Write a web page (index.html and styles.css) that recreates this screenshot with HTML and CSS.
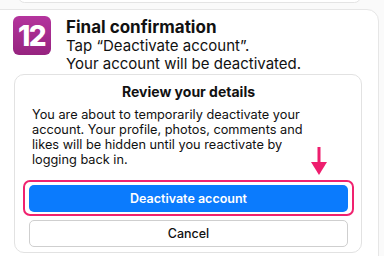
FILE: index.html
```html
<!DOCTYPE html>
<html>
<head>
<meta charset="utf-8">
<link rel="stylesheet" href="styles.css">
</head>
<body>
<div class="prev"></div>
<section class="step">
  <div class="step-head">
    <div class="badge">12</div>
    <div class="step-text">
      <h1 class="step-title">Final confirmation</h1>
      <p class="step-desc">Tap “Deactivate account”.<br>Your account will be deactivated.</p>
    </div>
  </div>
  <div class="panel">
    <h2 class="panel-title">Review your details</h2>
    <p class="panel-body">You are about to temporarily deactivate your<br>account. Your profile, photos, comments and<br>likes will be hidden until you reactivate by<br>logging back in.</p>
    <div class="highlight">
      <button class="btn btn-primary">Deactivate account</button>
      <span class="ring"></span>
      <svg class="arrow" width="16" height="29" viewBox="0 0 16 29"><rect x="6.5" y="0" width="3" height="18" fill="#ee1e6e"/><path d="M0 15 L16 15 L8 28 Z" fill="#ee1e6e"/></svg>
    </div>
    <button class="btn btn-secondary">Cancel</button>
  </div>
</section>
</body>
</html>
```
FILE: styles.css
```css
* { box-sizing: border-box; }
html, body { margin: 0; padding: 0; }
body {
  width: 384px;
  height: 256px;
  overflow: hidden;
  background: #fafafa;
  font-family: Inter, "Noto Sans", sans-serif;
  color: #111;
}
.prev {
  margin: -10px 0 0 18px;
  width: 343px;
  height: 13px;
  border: 1px solid #e4e4e4;
  border-radius: 12px;
  background: #fff;
}
.step {
  margin: 6px 0 0 -12px;
  width: 391px;
  height: 260px;
  border: 1px solid #e6e6e6;
  border-radius: 12px;
  background: #fff;
  padding: 6px 0 0 25px;
}
.step-head {
  display: flex;
  align-items: flex-start;
  gap: 15px;
}
.badge {
  width: 38px;
  height: 39px;
  margin-left: -1px;
  border-radius: 6px;
  background: linear-gradient(180deg, #b4349d 0%, #96237f 100%);
  color: #fff;
  font-weight: 800;
  font-size: 28px;
  letter-spacing: -1.5px;
  display: flex;
  align-items: center;
  justify-content: center;
  line-height: 1;
  padding-right: 1px;
}
.step-title {
  margin: 2px 0 0;
  font-size: 17px;
  font-weight: 700;
  line-height: 19px;
}
.step-desc {
  margin: 0;
  font-size: 15px;
  line-height: 18px;
  font-weight: 400;
}
.panel {
  position: relative;
  margin-top: 1px;
  width: 348px;
  height: 179px;
  border: 1px solid #e2e2e2;
  border-radius: 10px;
  background: #fff;
  padding: 8px 13px 0 14px;
}
.panel-title {
  margin: 0;
  text-align: center;
  font-size: 14px;
  font-weight: 700;
  line-height: 17px;
}
.panel-body {
  margin: 7px 0 0 3px;
  white-space: nowrap;
  font-size: 12.75px;
  line-height: 15px;
}
.highlight {
  position: relative;
  margin-top: 18px;
}
.btn {
  display: block;
  width: 100%;
  height: 27px;
  border-radius: 5px;
  font-family: inherit;
  font-size: 12.5px;
  font-weight: 600;
  padding: 0;
}
.btn-primary {
  background: #0b7bfd;
  color: #fff;
  border: none;
}
.btn-secondary {
  margin-top: 8px;
  background: #fff;
  color: #111;
  border: 1px solid #cfcfcf;
  font-weight: 500;
}
.ring {
  position: absolute;
  top: -5px;
  left: -6px;
  right: -6px;
  bottom: -4px;
  border: 2px solid #f0226f;
  border-radius: 7px;
}
.arrow {
  position: absolute;
  right: 21px;
  top: -38px;
}
```
